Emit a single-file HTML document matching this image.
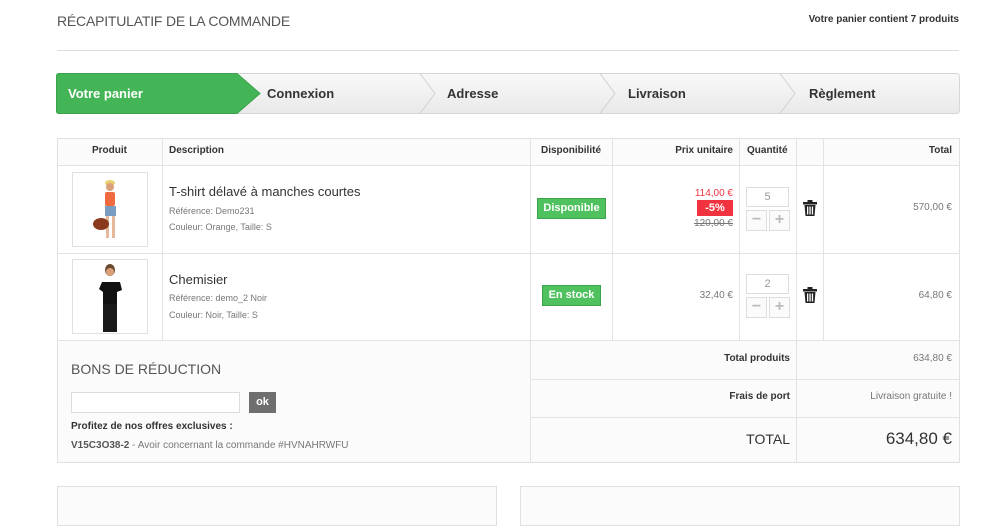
<!DOCTYPE html>
<html><head><meta charset="utf-8"><style>
*{margin:0;padding:0;box-sizing:border-box}
body{width:1000px;height:511px;background:#fff;font-family:"Liberation Sans",Arial,sans-serif;color:#333;position:relative;overflow:hidden}
.a{position:absolute}
.t{white-space:nowrap}
.b{border:1px solid #e0e0e0}
.hd{font-size:10px;font-weight:bold;color:#333}
.sm{font-size:9px;color:#777}
.qty{width:43px;height:20px;border:1px solid #ddd;background:#fff;font-size:11px;color:#999;text-align:center;line-height:18px}
.pm{width:21px;height:21px;border:1px solid #ddd;background:#fbfbfb;color:#bbb;font-size:16px;text-align:center;line-height:18px;font-weight:bold}
</style></head><body>
<div class="a t" style="left:57px;top:13px;font-size:14px;color:#555;letter-spacing:-0.2px">RÉCAPITULATIF DE LA COMMANDE</div>
<div class="a t" style="right:41px;top:14px;font-size:10px;font-weight:bold;color:#333">Votre panier contient 7 produits</div>
<div class="a" style="left:57px;top:50px;width:902px;height:1px;background:#ddd"></div>

<svg class="a" style="left:56px;top:73px" width="905" height="42">
<defs><linearGradient id="g" x1="0" y1="0" x2="0" y2="1"><stop offset="0" stop-color="#f9f9f9"/><stop offset="1" stop-color="#e9e9e9"/></linearGradient></defs>
<rect x="0.5" y="0.5" width="903" height="40" rx="3" fill="url(#g)" stroke="#d6d6d6"/>
<path d="M3,0.5 H181 L204,20.5 L181,40.5 H3 Q0.5,40.5 0.5,38 V3 Q0.5,0.5 3,0.5Z" fill="#44b556" stroke="#3aa34b"/>
<path d="M364,0.5 L379,20.5 L364,40.5" fill="none" stroke="#d0d0d0"/>
<path d="M544,0.5 L559,20.5 L544,40.5" fill="none" stroke="#d0d0d0"/>
<path d="M724,0.5 L739,20.5 L724,40.5" fill="none" stroke="#d0d0d0"/>
</svg>
<div class="a t" style="left:68px;top:86px;font-size:13px;font-weight:bold;color:#fff">Votre panier</div>
<div class="a t" style="left:267px;top:86px;font-size:13px;font-weight:bold;color:#333">Connexion</div>
<div class="a t" style="left:447px;top:86px;font-size:13px;font-weight:bold;color:#333">Adresse</div>
<div class="a t" style="left:628px;top:86px;font-size:13px;font-weight:bold;color:#333">Livraison</div>
<div class="a t" style="left:809px;top:86px;font-size:13px;font-weight:bold;color:#333">Règlement</div>

<div class="a b" style="left:57px;top:138px;width:903px;height:325px;background:#fff"></div>
<div class="a" style="left:58px;top:139px;width:901px;height:26px;background:#fbfbfb"></div>
<div class="a" style="left:58px;top:341px;width:901px;height:121px;background:#fbfbfb"></div>
<div class="a" style="left:57px;top:165px;width:903px;height:1px;background:#e3e3e3"></div>
<div class="a" style="left:57px;top:253px;width:903px;height:1px;background:#e3e3e3"></div>
<div class="a" style="left:57px;top:340px;width:903px;height:1px;background:#e3e3e3"></div>
<div class="a" style="left:530px;top:379px;width:430px;height:1px;background:#e3e3e3"></div>
<div class="a" style="left:530px;top:417px;width:430px;height:1px;background:#e3e3e3"></div>
<div class="a" style="left:162px;top:138px;width:1px;height:203px;background:#e3e3e3"></div>
<div class="a" style="left:530px;top:138px;width:1px;height:325px;background:#e3e3e3"></div>
<div class="a" style="left:612px;top:138px;width:1px;height:203px;background:#e3e3e3"></div>
<div class="a" style="left:739px;top:138px;width:1px;height:203px;background:#e3e3e3"></div>
<div class="a" style="left:796px;top:138px;width:1px;height:325px;background:#e3e3e3"></div>
<div class="a" style="left:823px;top:138px;width:1px;height:203px;background:#e3e3e3"></div>

<div class="a t hd" style="left:92px;top:145px">Produit</div>
<div class="a t hd" style="left:169px;top:145px">Description</div>
<div class="a t hd" style="left:541px;top:145px">Disponibilité</div>
<div class="a t hd" style="right:267px;top:145px">Prix unitaire</div>
<div class="a t hd" style="left:747px;top:145px">Quantité</div>
<div class="a t hd" style="right:48px;top:145px">Total</div>

<div class="a b" style="left:72px;top:172px;width:76px;height:75px;background:#fff"></div>
<svg class="a" style="left:90px;top:178px" width="40" height="66">
<ellipse cx="20" cy="5" rx="5" ry="3" fill="#e8d070"/><circle cx="20" cy="9" r="4" fill="#d9a07a"/>
<rect x="15" y="14" width="10" height="14" rx="2" fill="#f06a40"/><rect x="15" y="28" width="11" height="10" fill="#7a9cc0"/>
<rect x="16" y="38" width="3" height="22" fill="#e5b89a"/><rect x="22" y="38" width="3" height="22" fill="#e5b89a"/>
<ellipse cx="11" cy="46" rx="8" ry="6" fill="#8a3a1c"/>
</svg>
<div class="a t" style="left:169px;top:184px;font-size:13px;color:#333">T-shirt délavé à manches courtes</div>
<div class="a t sm" style="left:169px;top:206px">Référence: Demo231</div>
<div class="a t sm" style="left:169px;top:222px">Couleur: Orange, Taille: S</div>
<div class="a t" style="left:537px;top:198px;width:69px;height:21px;background:#50c15f;border:1px solid #3aa34b;color:#fff;font-size:11px;font-weight:bold;text-align:center;line-height:19px">Disponible</div>
<div class="a t" style="right:267px;top:188px;font-size:10px;color:#f13340">114,00 €</div>
<div class="a t" style="left:697px;top:200px;width:36px;height:16px;background:#f13340;color:#fff;font-size:11px;font-weight:bold;text-align:center;line-height:16px">-5%</div>
<div class="a t" style="right:267px;top:218px;font-size:10px;color:#777;text-decoration:line-through">120,00 €</div>
<div class="a qty" style="left:746px;top:187px">5</div>
<div class="a pm" style="left:746px;top:210px">−</div>
<div class="a pm" style="left:769px;top:210px">+</div>
<svg class="a" style="left:803px;top:200px" width="14" height="16"><rect x="0" y="2" width="14" height="2.5" fill="#222"/><rect x="4.5" y="0" width="5" height="3" fill="#222"/><path d="M1.5,5 H12.5 L11.5,16 H2.5Z" fill="#222"/><rect x="4" y="6.5" width="1.3" height="8" fill="#fff"/><rect x="6.4" y="6.5" width="1.3" height="8" fill="#fff"/><rect x="8.8" y="6.5" width="1.3" height="8" fill="#fff"/></svg>
<div class="a t" style="right:48px;top:202px;font-size:10px;color:#777">570,00 €</div>

<div class="a b" style="left:72px;top:259px;width:76px;height:75px;background:#fff"></div>
<svg class="a" style="left:90px;top:262px" width="40" height="72">
<ellipse cx="20" cy="8" rx="5" ry="6" fill="#6b4a30"/><circle cx="20" cy="10" r="4" fill="#d9a07a"/>
<path d="M12,20 H30 L32,28 L27,30 V42 H13 V30 L9,27Z" fill="#111"/><rect x="13" y="42" width="14" height="28" fill="#1a1a1a"/>
</svg>
<div class="a t" style="left:169px;top:272px;font-size:13px;color:#333">Chemisier</div>
<div class="a t sm" style="left:169px;top:293px">Référence: demo_2 Noir</div>
<div class="a t sm" style="left:169px;top:310px">Couleur: Noir, Taille: S</div>
<div class="a t" style="left:542px;top:285px;width:59px;height:21px;background:#50c15f;border:1px solid #3aa34b;color:#fff;font-size:11px;font-weight:bold;text-align:center;line-height:19px">En stock</div>
<div class="a t" style="right:267px;top:290px;font-size:10px;color:#777">32,40 €</div>
<div class="a qty" style="left:746px;top:274px">2</div>
<div class="a pm" style="left:746px;top:297px">−</div>
<div class="a pm" style="left:769px;top:297px">+</div>
<svg class="a" style="left:803px;top:287px" width="14" height="16"><rect x="0" y="2" width="14" height="2.5" fill="#222"/><rect x="4.5" y="0" width="5" height="3" fill="#222"/><path d="M1.5,5 H12.5 L11.5,16 H2.5Z" fill="#222"/><rect x="4" y="6.5" width="1.3" height="8" fill="#fff"/><rect x="6.4" y="6.5" width="1.3" height="8" fill="#fff"/><rect x="8.8" y="6.5" width="1.3" height="8" fill="#fff"/></svg>
<div class="a t" style="right:48px;top:290px;font-size:10px;color:#777">64,80 €</div>

<div class="a t" style="left:71px;top:361px;font-size:14px;color:#555">BONS DE RÉDUCTION</div>
<div class="a" style="left:71px;top:392px;width:169px;height:21px;border:1px solid #ddd;background:#fff"></div>
<div class="a t" style="left:249px;top:392px;width:27px;height:21px;background:#6f6f6f;color:#fff;font-size:11px;font-weight:bold;text-align:center;line-height:21px">ok</div>
<div class="a t" style="left:71px;top:421px;font-size:10px;font-weight:bold;color:#333">Profitez de nos offres exclusives :</div>
<div class="a t" style="left:71px;top:440px;font-size:10px;color:#777"><b style="color:#555">V15C3O38-2</b> - Avoir concernant la commande #HVNAHRWFU</div>
<div class="a t" style="right:210px;top:353px;font-size:10px;font-weight:bold;color:#333">Total produits</div>
<div class="a t" style="right:48px;top:353px;font-size:10px;color:#777">634,80 €</div>
<div class="a t" style="right:210px;top:391px;font-size:10px;font-weight:bold;color:#333">Frais de port</div>
<div class="a t" style="right:48px;top:391px;font-size:10px;color:#777">Livraison gratuite !</div>
<div class="a t" style="right:210px;top:431px;font-size:14px;color:#333">TOTAL</div>
<div class="a t" style="right:48px;top:429px;font-size:17px;color:#333">634,80 €</div>

<div class="a b" style="left:57px;top:486px;width:440px;height:40px;background:#fbfbfb"></div>
<div class="a b" style="left:520px;top:486px;width:440px;height:40px;background:#fbfbfb"></div>
</body></html>
